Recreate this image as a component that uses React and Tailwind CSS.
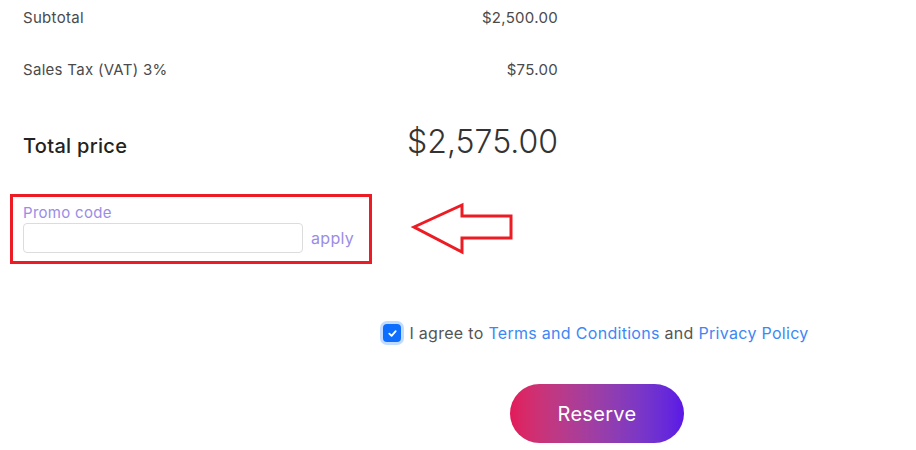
export default function App() {
  return (
    <div className="w-[916px] h-[450px] overflow-hidden bg-white font-['Inter',sans-serif] tracking-[0.3px]">
      {/* Summary rows */}
      <div className="w-[558px] pl-[23px]">
        <div className="flex h-[36px] items-center justify-between text-[15px] text-[#4a4a4a]">
          <span>Subtotal</span>
          <span>$2,500.00</span>
        </div>
        <div className="mt-[16px] flex h-[36px] items-center justify-between text-[15px] text-[#4a4a4a]">
          <span>Sales Tax (VAT) 3%</span>
          <span>$75.00</span>
        </div>
        <div className="mt-[30px] flex h-[50px] items-baseline justify-between">
          <span className="text-[20px] font-medium text-[#222]">Total price</span>
          <span className="text-[32px] font-light tracking-normal text-[#333]">$2,575.00</span>
        </div>
      </div>

      {/* Promo code */}
      <div className="mt-[26px] flex items-start">
        <div className="ml-[10px] h-[70px] w-[362px] border-[3px] border-[#ed1c24] pl-[10px] pt-[7px]">
          <div className="text-[15px] leading-[18px] text-[#9a8de6]">Promo code</div>
          <div className="mt-[1px] flex items-center">
            <input className="h-[30px] w-[280px] rounded-[4px] border border-[#dcdcdc] px-2 outline-none" />
            <span className="ml-[8px] text-[16px] text-[#9a8de6]">apply</span>
          </div>
        </div>
        <svg className="ml-[38px] mt-[8px]" width="106" height="55" viewBox="0 0 106 55">
          <polygon
            points="4,25 52,3 52,14 101,14 101,36 52,36 52,50"
            fill="none"
            stroke="#ed1c24"
            strokeWidth="3"
          />
        </svg>
      </div>

      {/* Agreement + button */}
      <div className="flex flex-col items-center pl-[276px]">
        <div className="mt-[57px] flex items-center text-[16px] text-[#555]">
          <span className="mr-[8px] flex h-[18px] w-[18px] items-center justify-center rounded-[4px] bg-[#0d6efd] shadow-[0_0_0_3px_rgba(13,110,253,0.25)]">
            <svg width="11" height="11" viewBox="0 0 12 12">
              <path d="M2.5 6.2 L5 8.5 L9.5 3.5" fill="none" stroke="#fff" strokeWidth="2" strokeLinecap="round" strokeLinejoin="round" />
            </svg>
          </span>
          <span>
            I agree to <span className="text-[#3d87f5]">Terms and Conditions</span> and{' '}
            <span className="text-[#3d87f5]">Privacy Policy</span>
          </span>
        </div>
        <button className="ml-[2px] mt-[39px] h-[59px] w-[174px] rounded-full bg-gradient-to-r from-[#e3195a] to-[#5b16e6] text-[20px] text-white">
          Reserve
        </button>
      </div>
    </div>
  );
}
